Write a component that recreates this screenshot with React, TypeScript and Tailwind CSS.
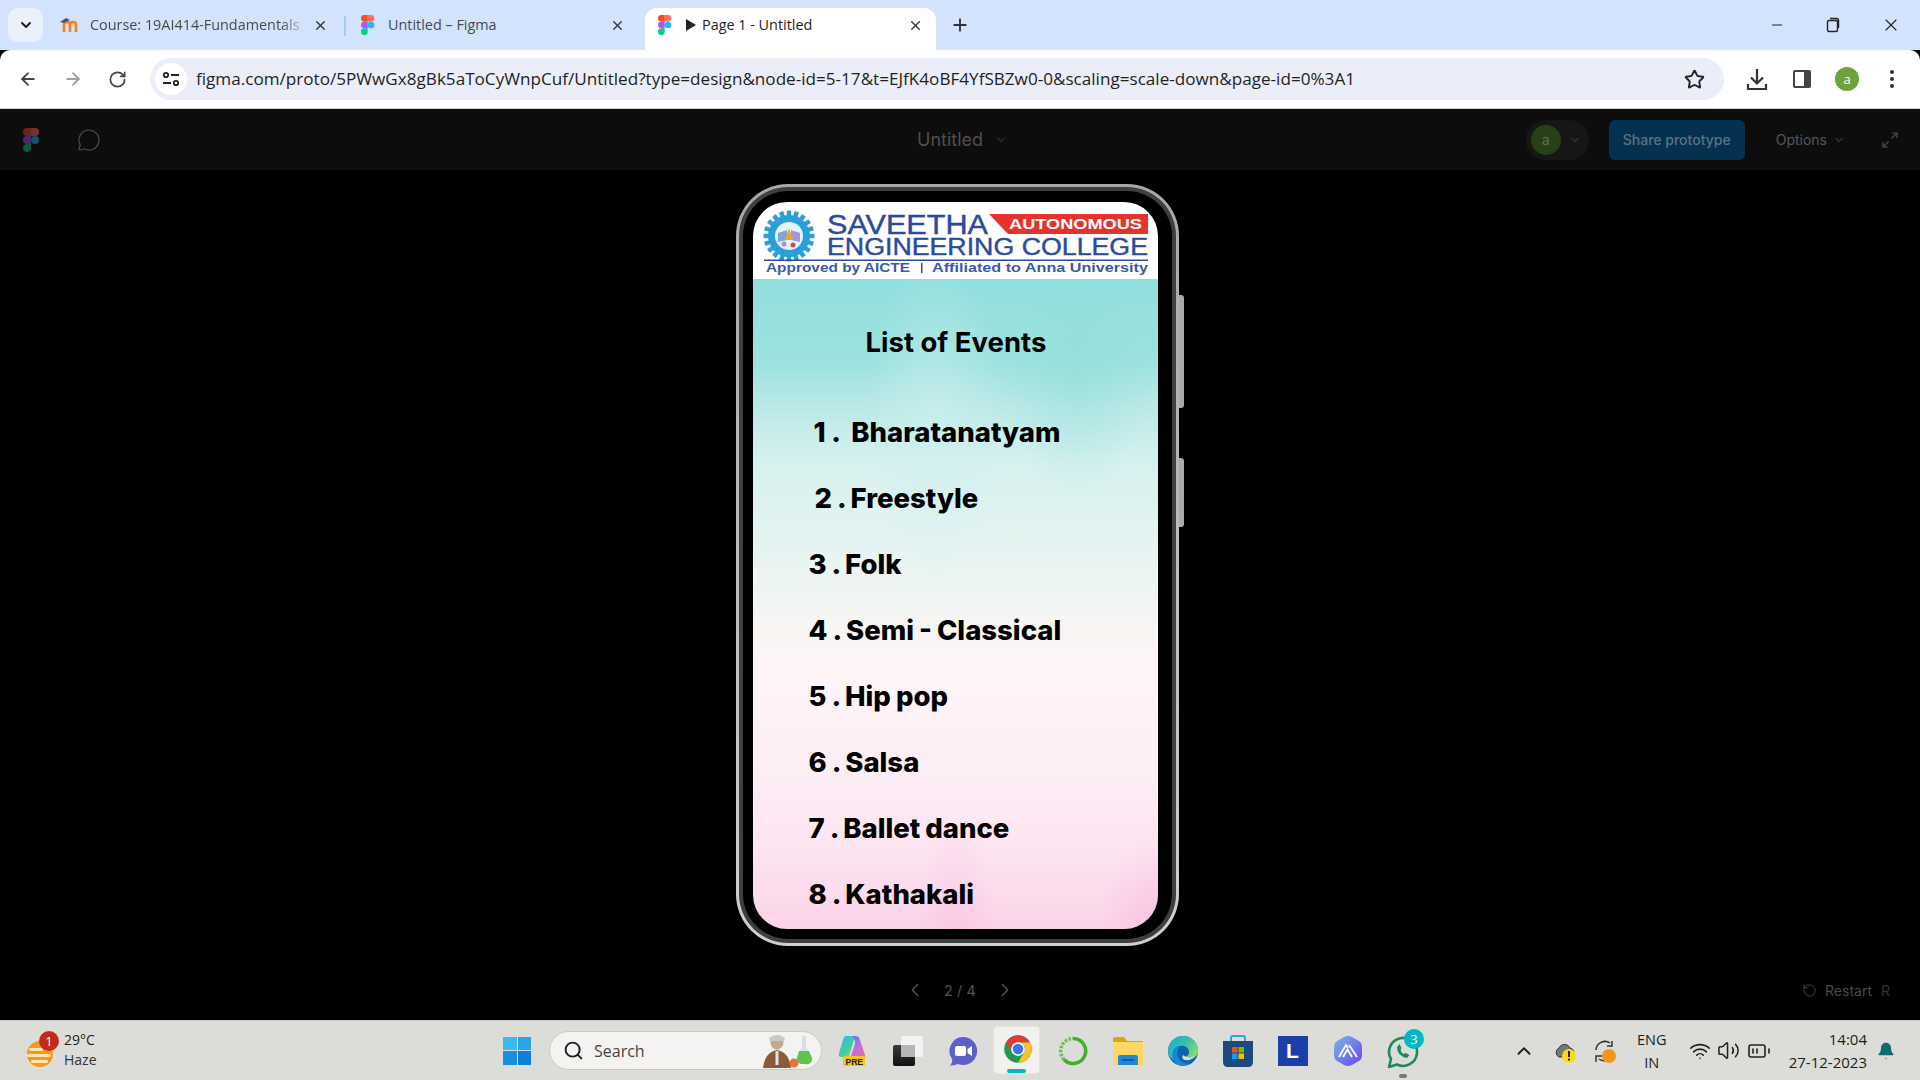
import React from "react";
import { ArrowLeft, ArrowRight, RotateCw, Star, X, Plus, ChevronDown, ChevronLeft, ChevronRight, ChevronUp, Minus, MessageCircle, Search, RotateCcw, Wifi, Volume2, BatteryMedium, Bell } from "lucide-react";

const ui = "font-['Open_Sans','Noto_Sans',sans-serif]";

function FigmaLogo({ dim = false, size = 20 }: { dim?: boolean; size?: number }) {
  return (
    <svg width={size * 0.67} height={size} viewBox="0 0 38 57" className={dim ? "opacity-40" : ""}>
      <path d="M19 28.5a9.5 9.5 0 1 1 19 0 9.5 9.5 0 0 1-19 0z" fill="#1abcfe" />
      <path d="M0 47.5A9.5 9.5 0 0 1 9.5 38H19v9.5a9.5 9.5 0 1 1-19 0z" fill="#0acf83" />
      <path d="M19 0v19h9.5a9.5 9.5 0 1 0 0-19H19z" fill="#ff7262" />
      <path d="M0 9.5A9.5 9.5 0 0 0 9.5 19H19V0H9.5A9.5 9.5 0 0 0 0 9.5z" fill="#f24e1e" />
      <path d="M0 28.5A9.5 9.5 0 0 0 9.5 38H19V19H9.5A9.5 9.5 0 0 0 0 28.5z" fill="#a259ff" />
    </svg>
  );
}

function Tab({ icon, title, active, fade, cls, prefix }: { icon: React.ReactNode; title: string; active?: boolean; fade?: boolean; cls: string; prefix?: React.ReactNode }) {
  return (
    <div className={`${cls} flex h-[42px] items-center shrink-0 pb-[8px] ${active ? "bg-white rounded-t-[12px]" : ""}`}>
      <div className="w-[22px] flex justify-center shrink-0">{icon}</div>
      {prefix}
      <span className={`${prefix ? "ml-[6px]" : "ml-[9px]"} flex-1 text-[14.4px] whitespace-nowrap overflow-hidden ${active ? "text-[#1f1f1f]" : "text-[#474a4d]"} ${fade ? "[mask-image:linear-gradient(to_right,black_88%,transparent)]" : ""}`}>{title}</span>
      <X size={15} strokeWidth={2.4} className="text-[#3c3f42] shrink-0 ml-[6px]" />
    </div>
  );
}

function LogoHeader() {
  const navy = "#2a4b9b";
  const teeth = Array.from({ length: 20 }, (_, i) => i * 18);
  return (
    <svg viewBox="0 0 405 77" className="block w-full h-[77px] bg-white">
      <g transform="translate(36 34)">
        {teeth.map((a) => (
          <rect key={a} x="-2.2" y="-25.5" width="4.4" height="6" fill="#2a9fd8" transform={`rotate(${a})`} />
        ))}
        <circle r="21" fill="#2a9fd8" />
        <circle r="14" fill="#e4f3fa" />
        <path d="M-11 -3 L-2 -6 L-2 4 L-11 6z" fill="#7fa6dc" />
        <path d="M11 -3 L2 -6 L2 4 L11 6z" fill="#a994d6" />
        <path d="M0 -8 L4 4 H-4z" fill="#e9a92f" />
        <circle cx="-5" cy="8" r="2.5" fill="#b489d6" />
        <circle cx="4" cy="9" r="2.5" fill="#d24a4a" />
      </g>
      <text x="74" y="32" fontFamily="Liberation Sans, sans-serif" fontSize="28" fill={navy} stroke={navy} strokeWidth="0.45" textLength="161" lengthAdjust="spacingAndGlyphs">SAVEETHA</text>
      <path d="M236 12 H395 V32 H255z" fill="#e5322d" />
      <text x="256" y="27" fontFamily="Liberation Sans, sans-serif" fontWeight="700" fontSize="14" fill="#fff" textLength="133" lengthAdjust="spacingAndGlyphs">AUTONOMOUS</text>
      <text x="74" y="53" fontFamily="Liberation Sans, sans-serif" fontSize="23.5" fill={navy} stroke={navy} strokeWidth="0.4" textLength="321" lengthAdjust="spacingAndGlyphs">ENGINEERING COLLEGE</text>
      <rect x="11" y="57.5" width="384" height="1.5" fill={navy} />
      <text x="13" y="70" fontFamily="Liberation Sans, sans-serif" fontWeight="700" fontSize="12" fill="#3a5aa6" textLength="144" lengthAdjust="spacingAndGlyphs">Approved by AICTE</text>
      <rect x="168" y="61" width="1.5" height="10" fill={navy} />
      <text x="179" y="70" fontFamily="Liberation Sans, sans-serif" fontWeight="700" fontSize="12" fill="#3a5aa6" textLength="216" lengthAdjust="spacingAndGlyphs">Affiliated to Anna University</text>
    </svg>
  );
}

const events = ["1 .  Bharatanatyam", "2 . Freestyle", "3 . Folk", "4 . Semi - Classical", "5 . Hip pop", "6 . Salsa", "7 . Ballet dance", "8 . Kathakali"];
const offs = ["pl-[61px] [word-spacing:-0.3px]", "pl-[62px] [word-spacing:-1px]", "pl-[56px] [word-spacing:-1px]", "pl-[56px] [word-spacing:-1px]", "pl-[56px] [word-spacing:-1px]", "pl-[56px] [word-spacing:-1px]", "pl-[56px] [word-spacing:-1px]", "pl-[56px] [word-spacing:-1px]"];

function Phone() {
  return (
    <div className="relative w-[443px] h-[762px]">
      <div className="absolute right-[-5px] top-[111px] w-[6px] h-[113px] bg-[#a9a9a9] rounded-r-[3px]" />
      <div className="absolute right-[-5px] top-[274px] w-[6px] h-[69px] bg-[#a9a9a9] rounded-r-[3px]" />
      <div className="relative h-full rounded-[52px] bg-[linear-gradient(to_bottom,#a8a8a8,#cfcfcf)] p-[3px]">
        <div className="h-full rounded-[49px] bg-[#3f3f3f] p-[4px]">
          <div className="h-full rounded-[45px] bg-black pt-[11px] pb-[10px] pl-[10px] pr-[14px]">
            <div className="h-[727px] rounded-[34px] overflow-hidden font-['Inter',sans-serif] text-black">
              <LogoHeader />
              <div className="h-[650px] bg-[radial-gradient(ellipse_at_80%_14%,rgba(141,221,214,0.45),transparent_16%),radial-gradient(ellipse_at_45%_22%,rgba(205,240,240,0.6),transparent_22%),radial-gradient(ellipse_at_100%_100%,rgba(250,180,220,0.55),transparent_10%),radial-gradient(ellipse_at_50%_102%,rgba(250,190,225,0.5),transparent_14%),linear-gradient(to_bottom,#92dfdf_0%,#9de2de_13%,#bce9e8_20%,#d6f1ef_28%,#e6f4f1_42%,#f9f6f4_54%,#fff4f7_62%,#fdeef5_76%,#fce4f1_88%,#fbd3e8_100%)]">
                <div className="h-[121px] pt-[45px] pl-[113px] text-[27.5px] font-bold leading-[36px] whitespace-pre">List of Events</div>
                {events.map((e, i) => (
                  <div key={e} className={`h-[66px] flex items-center text-[27.5px] font-extrabold whitespace-pre ${offs[i]}`}>{e}</div>
                ))}
              </div>
            </div>
          </div>
        </div>
      </div>
    </div>
  );
}

function TB({ children, w = "w-[55px]" }: { children: React.ReactNode; w?: string }) {
  return <div className={`${w} h-full flex items-center justify-center shrink-0 relative`}>{children}</div>;
}

function Taskbar() {
  return (
    <div className={`h-[60px] bg-[#dcdcd9] border-t border-[#c8c8c5] flex items-center relative shrink-0 ${ui} text-[#1c1c1c]`}>
      <div className="w-[505px] h-full flex items-center pl-[26px] shrink-0">
        <div className="relative w-[34px] h-[36px]">
          <svg width="30" height="36" viewBox="0 0 30 36" className="absolute top-[3px] left-0">
            <circle cx="14" cy="18" r="13" fill="#f39a1c" />
            <rect x="3" y="12" width="14" height="3" rx="1.5" fill="#fde6b0" />
            <rect x="1" y="18" width="24" height="3" rx="1.5" fill="#fde6b0" />
            <rect x="5" y="24" width="17" height="3" rx="1.5" fill="#fde6b0" />
          </svg>
          <div className="absolute left-[13px] top-[-2px] w-[20px] h-[20px] rounded-full bg-[#c42b1c] text-white text-[13px] leading-[20px] text-center">1</div>
        </div>
        <div className="ml-[4px] text-[14px] leading-[20px] -translate-y-[1px]">
          <div>29°C</div>
          <div className="text-[#333]">Haze</div>
        </div>
      </div>
      <div className="w-[28px] h-[28px] shrink-0 grid grid-cols-2 gap-[1px] -ml-[2px] mr-[18px]">
        <div className="bg-[#3bb9f2]" /><div className="bg-[#2aa5ea]" /><div className="bg-[#1a8fdd]" /><div className="bg-[#0f80d7]" />
      </div>
      <div className="w-[273px] h-[39px] rounded-full bg-[#f4f3f1] border border-[#c9c9c6] flex items-center pl-[13px] shrink-0 relative">
        <Search size={21} strokeWidth={2.2} className="text-[#222]" />
        <span className="ml-[10px] text-[16px] text-[#444]">Search</span>
        <svg width="60" height="36" viewBox="0 0 60 36" className="absolute right-[4px] top-[0px]">
          <circle cx="20" cy="11" r="6.5" fill="#caa98a" />
          <path d="M12 6 q8-6 16 0 l-1 3 h-14z" fill="#c9c9c9" />
          <path d="M6 36 Q8 20 20 18 Q32 20 34 36z" fill="#8a5a3a" />
          <rect x="18.5" y="19" width="3" height="14" fill="#dfe6ee" />
          <path d="M45 4 h4 v11 l5 10 a5 5 0 0 1 -5 7 h-4 a5 5 0 0 1 -5 -7 l5 -10z" fill="#cfe3ea" />
          <path d="M42 19 h10 l3 7 a5 5 0 0 1 -6 6 h-4 a5 5 0 0 1 -5 -6z" fill="#5fc44d" />
          <circle cx="37" cy="31" r="4.5" fill="#e2763a" />
        </svg>
      </div>
      <div className="flex h-full items-center ml-[3px]">
        <TB>
          <svg width="30" height="32" viewBox="0 0 30 32">
            <defs>
              <linearGradient id="cpa" x1="0" y1="0" x2="1" y2="1"><stop offset="0" stopColor="#2fb8f0" /><stop offset="0.6" stopColor="#3fd0a0" /><stop offset="1" stopColor="#e8c83a" /></linearGradient>
              <linearGradient id="cpb" x1="0" y1="0" x2="1" y2="1"><stop offset="0" stopColor="#3a7fe8" /><stop offset="0.5" stopColor="#c86bd8" /><stop offset="1" stopColor="#e86b9c" /></linearGradient>
            </defs>
            <path d="M8 1 h9 l-6 21 H3 q-3 0-2-4 L5 5 q1-4 3-4z" fill="url(#cpa)" />
            <path d="M14 1 h4 q3 0 4 4 l5 15 q1 3-3 4 H12 L17 9 q1-3-3-8z" fill="url(#cpb)" />
            <rect x="5" y="21" width="22" height="10" rx="1.5" fill="#f7c31c" />
            <text x="7.5" y="29.5" fontSize="8.5" fontWeight="700" fontFamily="Liberation Sans, sans-serif" fill="#222">PRE</text>
          </svg>
        </TB>
        <TB>
          <div className="relative w-[30px] h-[30px]">
            <div className="absolute left-0 bottom-0 w-[22px] h-[21px] bg-[linear-gradient(to_bottom,#3a3a3a,#111)] rounded-[2px]" />
            <div className="absolute right-0 top-0 w-[22px] h-[21px] bg-[#f4f4f4]/90 rounded-[2px]" />
            <div className="absolute left-[8px] top-[9px] w-[14px] h-[12px] bg-[#b5b5b5]" />
          </div>
        </TB>
        <TB>
          <svg width="30" height="30" viewBox="0 0 30 30">
            <path d="M15 1 a14 14 0 1 1 -5 27 q-4 1.5-8 1.5 q3-3 2-6.5 A14 14 0 0 1 15 1z" fill="#5f5fc8" />
            <rect x="7" y="10" width="11" height="10" rx="2" fill="#fff" />
            <path d="M19.5 13 l4.5-3 v10 l-4.5-3z" fill="#fff" />
          </svg>
        </TB>
        <TB>
          <div className="absolute left-[3px] top-[5px] w-[47px] h-[48px] bg-[#f3f1ee] rounded-[4px] border border-[#e6e4e1]" />
          <svg width="30" height="30" viewBox="0 0 48 48" className="relative -translate-y-[2px]">
            <circle cx="24" cy="24" r="22" fill="#1e9b50" />
            <path d="M43 13 A22 22 0 0 1 24 46 L33.5 29.5 A11 11 0 0 0 24 13z" fill="#fbc02d" />
            <path d="M5 13 A22 22 0 0 1 43 13 H24 A11 11 0 0 0 14.5 29.5z" fill="#e53935" />
            <circle cx="24" cy="24" r="11" fill="#fff" />
            <circle cx="24" cy="24" r="8.5" fill="#3b78e7" />
          </svg>
          <div className="absolute bottom-[7px] left-[17px] w-[19px] h-[4px] rounded-full bg-[#00b7c3]" />
        </TB>
        <TB>
          <svg width="30" height="30" viewBox="0 0 30 30" fill="none">
            <path d="M15 2.5 A12.5 12.5 0 1 1 6 23.5" stroke="#43b02a" strokeWidth="3.5" />
            <path d="M6 23.5 A12.5 12.5 0 0 1 15 2.5" stroke="#6dbb58" strokeWidth="3.5" strokeDasharray="2.5 1.5" />
          </svg>
        </TB>
        <TB>
          <svg width="30" height="28" viewBox="0 0 30 28">
            <path d="M0 2 q0-2 2-2 h9 l3 4 h16 v4 H0z" fill="#e0a112" />
            <rect x="0" y="5" width="30" height="23" fill="#fdd663" />
            <path d="M5 28 v-8 q0-2 2-2 h16 q2 0 2 2 v8z" fill="#1f87d6" />
            <rect x="9" y="22" width="12" height="2" fill="#0b5ea8" />
          </svg>
        </TB>
        <TB>
          <svg width="30" height="30" viewBox="0 0 30 30">
            <defs>
              <linearGradient id="edg" x1="0" y1="0" x2="1" y2="0.6"><stop offset="0" stopColor="#1ea7e0" /><stop offset="0.55" stopColor="#35c1a8" /><stop offset="1" stopColor="#7fe06a" /></linearGradient>
            </defs>
            <circle cx="15" cy="15" r="15" fill="#0c63b0" />
            <path d="M0 15 A15 15 0 0 1 30 15 Q30 21 24 21 H17 Q22 19 21 15 Q19 9 12 10 Q3 11 5 24 Q0 20 0 15z" fill="url(#edg)" />
            <path d="M15 19 Q18 22 24 21 L28 20 Q23 25 17 24 Q13 23 15 19z" fill="#dcdcd9" />
            <path d="M5 24 Q3 11 12 10 Q8 14 10 21 Q12 27 22 28 Q11 33 5 24z" fill="#1a87d6" />
          </svg>
        </TB>
        <TB>
          <svg width="30" height="32" viewBox="0 0 30 32">
            <path d="M8 8 V3 q0-2 2-2 h10 q2 0 2 2 v5" fill="none" stroke="#2aa7d6" strokeWidth="2" />
            <path d="M0 6 H30 V27 q0 5-5 5 H5 q-5 0-5-5z" fill="#1c4a7c" />
            <rect x="9" y="12" width="5.5" height="5.5" fill="#f25022" /><rect x="15.5" y="12" width="5.5" height="5.5" fill="#7fba00" />
            <rect x="9" y="18.5" width="5.5" height="5.5" fill="#00a4ef" /><rect x="15.5" y="18.5" width="5.5" height="5.5" fill="#ffb900" />
          </svg>
        </TB>
        <TB>
          <div className="w-[30px] h-[30px] bg-[#1b3fa8] text-white font-['Liberation_Sans',sans-serif] font-bold text-[21px] leading-[30px] text-center">L</div>
        </TB>
        <TB>
          <svg width="28" height="30" viewBox="0 0 28 30">
            <defs>
              <linearGradient id="arc" x1="0" y1="0" x2="1" y2="1"><stop offset="0" stopColor="#78b8ee" /><stop offset="1" stopColor="#6a45ea" /></linearGradient>
            </defs>
            <path d="M10 1 Q14 -1 18 1 L25 5 Q28 7 28 11 V19 Q28 23 25 25 L18 29 Q14 31 10 29 L3 25 Q0 23 0 19 V11 Q0 7 3 5z" fill="url(#arc)" />
            <path d="M5 21 L12 9 L14 12 M9 21 L13.5 13.5 L18 21 M15 9 L23 21" stroke="#fff" strokeWidth="1.8" fill="none" />
          </svg>
        </TB>
        <TB>
          <svg width="32" height="32" viewBox="0 0 32 32" fill="none" className="translate-y-[1px]">
            <path d="M2 31 L4 23 A14 14 0 1 1 10 28.5z" stroke="#1d8a5a" strokeWidth="2.6" strokeLinejoin="round" />
            <path d="M10 11 q0 9 10 11 l2.5-3 -4-2 -2 1 q-2-1-3-4 l1-2 -2-4z" fill="#1d8a5a" />
          </svg>
          <div className="absolute left-[29px] top-[8px] w-[20px] h-[20px] rounded-full bg-[#00b7c3] text-white text-[13px] leading-[20px] text-center">3</div>
          <div className="absolute bottom-[2px] left-[24px] w-[8px] h-[4px] rounded-full bg-[#777]" />
        </TB>
      </div>
      <div className="flex-1" />
      <div className="flex items-center h-full pr-[24px] shrink-0">
        <ChevronUp size={22} strokeWidth={2} className="mr-[19px]" />
        <svg width="24" height="24" viewBox="0 0 24 24" className="mr-[15px]">
          <path d="M5 18 a5 5 0 0 1 0-9 a6 6 0 0 1 11 0 a5 5 0 0 1 2 9z" fill="#777" stroke="#333" />
          <circle cx="15" cy="17" r="7" fill="#f7dc1c" />
          <rect x="14" y="12" width="2" height="6" fill="#222" /><rect x="14" y="19.5" width="2" height="2" fill="#222" />
        </svg>
        <svg width="24" height="26" viewBox="0 0 24 26" fill="none" className="mr-[18px]">
          <path d="M3 12 A9 9 0 0 1 17 5 M19 3 V8 H14 M20 16 A9 9 0 0 1 6 21 M3 24 V18 H9" stroke="#333" strokeWidth="1.5" />
          <circle cx="16" cy="18" r="7" fill="#f7921e" />
        </svg>
        <div className="text-[14.5px] leading-[23px] text-center mr-[20px] w-[34px]">
          <div>ENG</div><div>IN</div>
        </div>
        <Wifi size={22} strokeWidth={1.8} className="mr-[6px] text-[#222]" />
        <Volume2 size={23} strokeWidth={1.6} className="mr-[7px] text-[#222]" />
        <BatteryMedium size={24} strokeWidth={1.6} className="text-[#222] mr-[18px]" />
        <div className="text-[15px] leading-[23px] text-right mr-[9px]">
          <div>14:04</div><div>27-12-2023</div>
        </div>
        <Bell size={20} fill="#0e6b6e" strokeWidth={0} className="text-[#0e6b6e]" />
      </div>
    </div>
  );
}

export default function App() {
  return (
    <div className={`w-[1920px] h-[1080px] flex flex-col overflow-hidden bg-black ${ui}`}>
      {/* tab strip */}
      <div className="h-[50px] bg-[#d3e3fd] flex items-end shrink-0 relative">
        <div className="mb-[8px] ml-[8px] w-[35px] h-[34px] rounded-[10px] bg-[#ebf1fc] flex items-center justify-center mr-[7px]">
          <ChevronDown size={16} strokeWidth={3} className="text-[#1f1f1f]" />
        </div>
        <Tab cls="w-[294px] pl-[9px] pr-[16px]" fade title="Course: 19AI414-Fundamentals" icon={
          <svg width="20" height="16" viewBox="0 0 20 16"><path d="M4 15 V8 q0-3 3-3 q3 0 3 3 v7 M10 8 q0-3 3-3 q3 0 3 3 v7" stroke="#f98012" strokeWidth="2.6" fill="none" /><path d="M0 5 L6 1 L10 3 L4 6z" fill="#555" /></svg>
        } />
        <div className="w-[2px] h-[20px] bg-[#a8c7fa] mb-[14px] shrink-0" />
        <Tab cls="w-[299px] pl-[11px] pr-[20px]" title="Untitled – Figma" icon={<FigmaLogo />} />
        <Tab cls="w-[291px] pl-[9px] pr-[13px]" active title="Page 1 - Untitled" icon={<FigmaLogo />} prefix={
          <svg width="10" height="12" viewBox="0 0 10 12" className="ml-[10px] shrink-0"><path d="M0 0 L10 6 L0 12z" fill="#222" /></svg>
        } />
        <Plus size={20} strokeWidth={2.2} className="ml-[14px] mb-[15px] text-[#333]" />
        <div className="flex-1" />
        <div className="flex items-center mb-[15px] pr-[19px] text-[#222] gap-[41px]">
          <Minus size={16} strokeWidth={1.5} />
          <svg width="14" height="16" viewBox="0 0 14 16" fill="none" stroke="#222" strokeWidth="1.4"><rect x="1.5" y="3.5" width="10" height="11" rx="1.5" /><path d="M4 1.5 H10.5 Q12.5 1.5 12.5 3.5 V11" /></svg>
          <X size={20} strokeWidth={1.3} />
        </div>
      </div>
      {/* toolbar */}
      <div className="h-[59px] bg-white rounded-t-[10px] border-b border-[#d9d9d9] flex items-center shrink-0 text-[#444746] relative">
        <div className="w-[150px] flex items-center shrink-0 pl-[18px]">
          <ArrowLeft size={20} strokeWidth={2.2} />
          <ArrowRight size={20} strokeWidth={2.2} className="ml-[25px] text-[#9aa0a6]" />
          <RotateCw size={19} strokeWidth={2.2} className="ml-[25px]" />
        </div>
        <div className="w-[1574px] h-[42px] rounded-full bg-[#ebeef8] flex items-center shrink-0 pl-[5px] pr-[19px]">
          <div className="w-[32px] h-[32px] rounded-full bg-white flex items-center justify-center shrink-0">
            <svg width="18" height="16" viewBox="0 0 18 16" fill="none" stroke="#222" strokeWidth="1.8">
              <circle cx="4" cy="4" r="2.2" /><path d="M9 4 H17 M1 12 H9" /><circle cx="14" cy="12" r="2.2" />
            </svg>
          </div>
          <span className="ml-[9px] text-[17.12px] text-[#1f1f1f] whitespace-nowrap flex-1">figma.com/proto/5PWwGx8gBk5aToCyWnpCuf/Untitled?type=design&amp;node-id=5-17&amp;t=EJfK4oBF4YfSBZw0-0&amp;scaling=scale-down&amp;page-id=0%3A1</span>
          <Star size={21} strokeWidth={2.2} className="text-[#222]" />
        </div>
        <div className="flex items-center flex-1 pl-[22px] text-[#333]">
          <svg width="22" height="23" viewBox="0 0 22 23" fill="none" stroke="#333" strokeWidth="2.2">
            <path d="M11 1 V15 M5 9.5 L11 15.5 L17 9.5" /><path d="M2 16 V21 H20 V16" />
          </svg>
          <svg width="20" height="20" viewBox="0 0 20 20" className="ml-[24px]"><rect x="1" y="1" width="18" height="18" rx="2" fill="#444" /><rect x="3" y="3" width="9" height="14" fill="#fff" /></svg>
          <div className="ml-[23px] w-[24px] h-[24px] rounded-full bg-[#6ea33a] text-white text-[13px] leading-[24px] text-center">a</div>
          <svg width="4" height="18" viewBox="0 0 4 18" className="ml-[31px]"><circle cx="2" cy="2" r="2" fill="#333" /><circle cx="2" cy="9" r="2" fill="#333" /><circle cx="2" cy="16" r="2" fill="#333" /></svg>
        </div>
      </div>
      {/* figma bar */}
      <div className="h-[61px] bg-[#0d0d0d] flex items-center shrink-0 relative font-['Inter',sans-serif]">
        <div className="ml-[23px]"><FigmaLogo dim size={24} /></div>
        <MessageCircle size={24} strokeWidth={1.2} className="ml-[38px] text-[#4c4c4c]" />
        <div className="absolute left-[917px] top-0 h-full flex items-center text-[#4f4f4f] text-[18px]">
          Untitled<ChevronDown size={12} strokeWidth={2} className="ml-[12px]" />
        </div>
        <div className="flex-1" />
        <div className="w-[63px] h-[40px] rounded-[20px] bg-[#161616] flex items-center pl-[5px] text-[#555]">
          <div className="w-[30px] h-[30px] rounded-full bg-[#28401a] text-[#5f6e55] text-[14px] leading-[30px] text-center">a</div>
          <ChevronDown size={12} strokeWidth={2} className="ml-[8px]" />
        </div>
        <div className="ml-[20px] w-[136px] h-[40px] rounded-[6px] bg-[#03314f] text-[#5e7283] text-[14px] font-medium leading-[40px] text-center whitespace-nowrap">Share prototype</div>
        <div className="ml-[31px] flex items-center text-[#575757] text-[14px]">
          Options<ChevronDown size={12} strokeWidth={2} className="ml-[6px]" />
        </div>
        <svg width="18" height="18" viewBox="0 0 18 18" fill="none" stroke="#4d4d4d" strokeWidth="1.2" className="ml-[36px] mr-[21px]">
          <path d="M11 2 H16 V7 M16 2 L10.5 7.5 M2 11 V16 H7 M2 16 L7.5 10.5" />
        </svg>
      </div>
      {/* canvas */}
      <div className="flex-1 bg-black relative min-h-0">
        <div className="flex justify-center pt-[14px] pr-[6px]"><Phone /></div>
        <div className="flex items-center justify-center text-[#555] text-[14px] font-['Inter',sans-serif] mt-[33px]">
          <ChevronLeft size={22} strokeWidth={1.5} />
          <span className="mx-[18px] tracking-[0.2px]">2 / 4</span>
          <ChevronRight size={22} strokeWidth={1.5} />
        </div>
        <div className="absolute right-[30px] bottom-[19px] flex items-center text-[#4a4a4a] text-[14px] font-['Inter',sans-serif]">
          <RotateCcw size={15} strokeWidth={1.5} />
          <span className="ml-[8px]">Restart</span>
          <span className="ml-[9px] text-[#333]">R</span>
        </div>
      </div>
      <Taskbar />
    </div>
  );
}
